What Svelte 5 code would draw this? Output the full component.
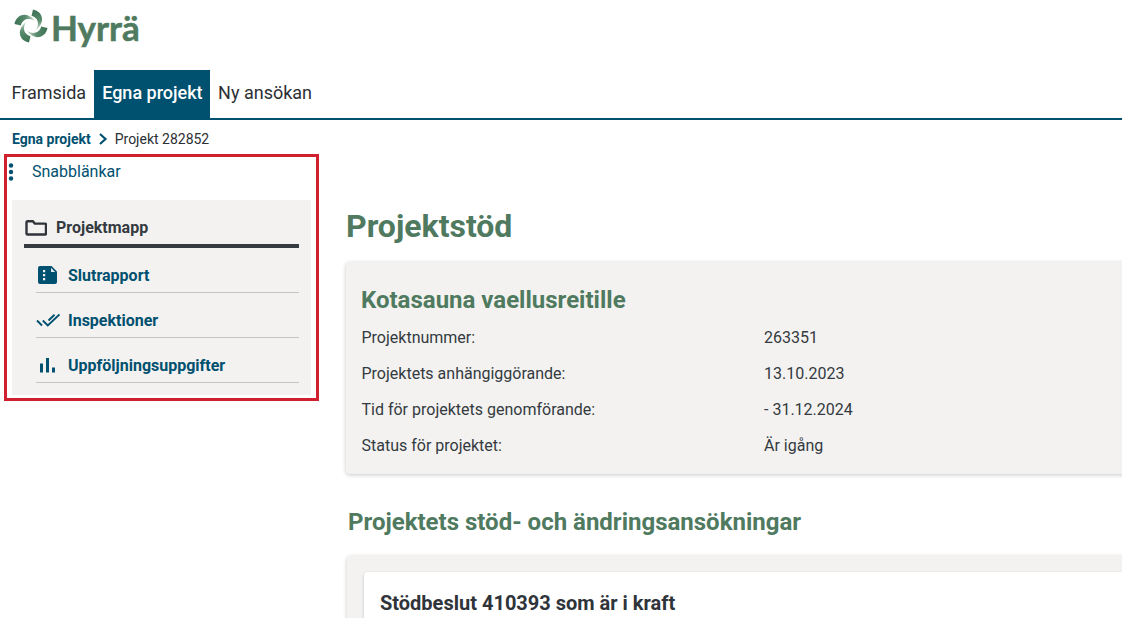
<script>
  const nav = [
    { label: "Framsida" },
    { label: "Egna projekt", active: true },
    { label: "Ny ansökan" },
  ];
  const facts = [
    ["Projektnummer:", "263351"],
    ["Projektets anhängiggörande:", "13.10.2023"],
    ["Tid för projektets genomförande:", "- 31.12.2024"],
    ["Status för projektet:", "Är igång"],
  ];
  const blades = [0, 90, 180, 270];
</script>

<div class="page">
  <header class="logo-row">
    <svg class="swirl" viewBox="0 0 36 36" width="36" height="36" aria-hidden="true">
      <defs>
        <linearGradient id="blade" gradientUnits="userSpaceOnUse" x1="3" y1="16" x2="21" y2="12">
          <stop offset="0" stop-color="#3d7355" />
          <stop offset="0.6" stop-color="#5b8c6e" />
          <stop offset="1" stop-color="#bcd5c1" />
        </linearGradient>
      </defs>
      {#each blades as deg}
        <path
          d="M1.500 16C3 7.500 13 2 22 13C18 10.500 13.500 10.500 11 12.500C9.500 13.800 8 15.500 8 17.500Z"
          fill="url(#blade)"
          transform="rotate({deg} 18 18)"
        />
      {/each}
    </svg>
    <span class="wordmark">Hyrrä</span>
  </header>

  <nav class="topnav">
    {#each nav as item}
      <span class="nav-item" class:active={item.active}>{item.label}</span>
    {/each}
  </nav>

  <div class="crumbs">
    <span class="crumb-link">Egna projekt</span>
    <svg viewBox="0 0 10 12" width="10" height="12" aria-hidden="true">
      <path d="M2 1 7.500 6 2 11" fill="none" stroke="#00506f" stroke-width="2.200" />
    </svg>
    <span>Projekt 282852</span>
  </div>

  <div class="columns">
    <aside class="side">
      <div class="quick">
        <svg viewBox="0 0 6 18" width="6" height="18" aria-hidden="true">
          <circle cx="3" cy="2.500" r="2.200" />
          <circle cx="3" cy="9" r="2.200" />
          <circle cx="3" cy="15.500" r="2.200" />
        </svg>
        <span>Snabblänkar</span>
      </div>
      <div class="panel">
        <div class="panel-head">
          <svg viewBox="0 0 22 16" width="22" height="16" aria-hidden="true">
            <path d="M1.500 13.500V2.300c0-.6.400-1 1-1h5.300l2 2.300h10.200c.6 0 1 .4 1 1v8.900c0 .6-.4 1-1 1H2.500c-.6 0-1-.4-1-1z" fill="none" stroke="#2f343a" stroke-width="2.400" />
          </svg>
          <span>Projektmapp</span>
        </div>
        <ul class="links">
          <li>
            <span class="ico">
              <svg viewBox="0 0 22 20" width="22" height="20" aria-hidden="true">
                <path d="M4 1h11.500L21 6.500V17a2 2 0 0 1-2 2H4a2 2 0 0 1-2-2V3a2 2 0 0 1 2-2z" fill="#00506f" />
                <path d="M15 2.800 19.200 7H15z" fill="#dfe8ec" />
                <path d="M7 5h2.200v2.200H7zM7 9h2.200v2.200H7zM7 13h2.200v2.200H7z" fill="#f3f2f1" />
              </svg>
            </span>
            Slutrapport
          </li>
          <li>
            <span class="ico">
              <svg viewBox="0 0 24 14" width="24" height="14" aria-hidden="true">
                <path d="M1 7.500l5 5M6.800 7.500l5 5L23.500 1.500M12.500 7.500 18.500 1.800" fill="none" stroke="#00506f" stroke-width="1.900" />
              </svg>
            </span>
            Inspektioner
          </li>
          <li>
            <span class="ico">
              <svg viewBox="0 0 20 16" width="20" height="16" aria-hidden="true">
                <path d="M4 6.500h3v9H4zM10 1h3v14.500h-3zM16 10.500h3v5h-3z" fill="#00506f" />
              </svg>
            </span>
            Uppföljningsuppgifter
          </li>
        </ul>
      </div>
    </aside>

    <main class="content">
      <h1>Projektstöd</h1>
      <section class="card info">
        <h2>Kotasauna vaellusreitille</h2>
        <dl>
          {#each facts as [k, v]}
            <div class="fact">
              <dt>{k}</dt>
              <dd>{v}</dd>
            </div>
          {/each}
        </dl>
      </section>
      <h2 class="sub">Projektets stöd- och ändringsansökningar</h2>
      <section class="card outer">
        <div class="inner">
          <h3>Stödbeslut 410393 som är i kraft</h3>
        </div>
      </section>
    </main>
  </div>
</div>

<style>
  :global(html), :global(body) {
    margin: 0;
    overflow: hidden;
    background: #fff;
  }

  .page {
    width: 1122px;
    height: 618px;
    overflow: hidden;
    font-family: Roboto, "Liberation Sans", sans-serif;
    color: #343a40;
  }

  .logo-row {
    height: 70px;
    display: flex;
    align-items: flex-start;
    padding: 8px 0 0 13px;
    box-sizing: border-box;
  }
  .swirl { flex: none; }
  .wordmark {
    font-family: Lato, "Open Sans", sans-serif;
    font-weight: 700;
    font-size: 35px;
    line-height: 40px;
    color: #4f7a60;
    margin: -1px 0 0 2px;
    -webkit-text-stroke: 0.5px #4f7a60;
  }

  .topnav {
    display: flex;
    height: 48px;
    border-bottom: 2px solid #00506f;
    padding-left: 3.5px;
  }
  .nav-item {
    font-size: 18px;
    line-height: 46px;
    padding: 0 8px;
    color: #2b2f33;
  }
  .nav-item.active {
    background: #00506f;
    color: #fff;
    font-weight: 500;
    height: 48px;
    padding-right: 7.5px;
  }

  .crumbs {
    display: flex;
    align-items: center;
    height: 34px;
    padding: 4px 0 0 12px;
    box-sizing: border-box;
    gap: 7px;
    font-size: 14px;
    color: #2b2f33;
  }
  .crumb-link {
    font-weight: 700;
    color: #00506f;
  }

  .columns {
    display: flex;
    align-items: flex-start;
  }

  .side {
    width: 315px;
    height: 247px;
    margin-left: 4px;
    box-sizing: border-box;
    border: 3px solid #d0202e;
    padding: 0 5px;
    flex: none;
  }
  .quick {
    display: flex;
    align-items: center;
    height: 29px;
    color: #00506f;
    fill: #00506f;
    font-size: 16px;
    gap: 18px;
  }
  .quick svg { margin-left: -4px; }
  .panel {
    margin-top: 14px;
    background: #f3f2f1;
    height: 195px;
    width: 299px;
    padding: 0 12px;
    box-sizing: border-box;
  }
  .panel-head {
    display: flex;
    align-items: center;
    gap: 9px;
    height: 48px;
    box-sizing: border-box;
    border-bottom: 4px solid #343a40;
    padding: 11px 0 0 1px;
    font-size: 16px;
    font-weight: 700;
  }
  .links {
    list-style: none;
    margin: 0;
    padding: 0 0 0 12px;
  }
  .links li {
    display: flex;
    align-items: center;
    height: 45px;
    box-sizing: border-box;
    border-bottom: 1px solid #c4c4c4;
    padding-top: 10px;
    color: #00506f;
    font-size: 16px;
    font-weight: 700;
  }
  .ico {
    width: 32px;
    display: flex;
    flex: none;
  }

  .content {
    margin-left: 27px;
    width: 900px;
    flex: none;
  }
  h1 {
    margin: 52px 0 0;
    font-size: 32px;
    line-height: 40px;
    font-weight: 700;
    color: #4f7a60;
    height: 56px;
  }
  .card {
    background: #f3f2f1;
    border-radius: 4px;
    box-shadow: 0 1px 4px rgba(0, 0, 0, 0.22);
  }
  .info {
    height: 212px;
    padding: 22px 15px 0;
    box-sizing: border-box;
  }
  .info h2 {
    margin: 0;
    font-size: 24px;
    line-height: 32px;
    font-weight: 700;
    color: #4f7a60;
  }
  dl {
    margin: 3px 0 0 0.5px;
  }
  .fact {
    display: grid;
    grid-template-columns: 402.5px 1fr;
    height: 36px;
    align-items: center;
    font-size: 16px;
    color: #343a40;
  }
  dd { margin: 0; }
  .sub {
    margin: 32px 0 0 2px;
    font-size: 24px;
    line-height: 32px;
    font-weight: 700;
    color: #4f7a60;
    height: 50px;
  }
  .outer {
    margin-left: 1px;
    height: 120px;
    padding: 16px 17px;
    box-sizing: border-box;
  }
  .inner {
    background: #fff;
    height: 100px;
    border-radius: 4px;
    padding: 19px 16px;
    box-sizing: border-box;
    box-shadow: 0 1px 3px rgba(0, 0, 0, 0.2);
  }
  h3 {
    margin: 0;
    font-size: 20px;
    line-height: 24px;
    font-weight: 700;
    color: #2f343a;
  }
</style>
